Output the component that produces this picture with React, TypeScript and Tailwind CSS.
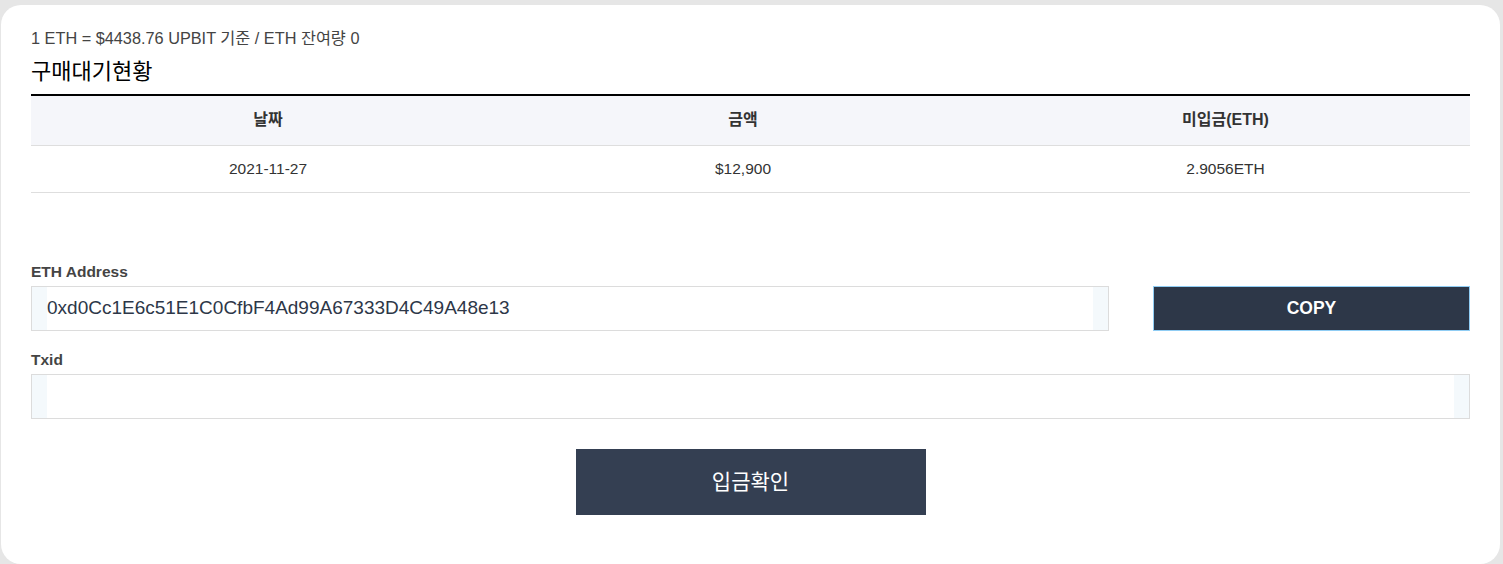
const rows = [{ date: "2021-11-27", amount: "$12,900", due: "2.9056ETH" }];

export default function App() {
  return (
    <div className="h-[564px] bg-[#e6e6e6] pt-[5px] pl-[1px] pr-[3px] font-['Liberation_Sans','Noto_Sans_CJK_KR',sans-serif]">
      <div className="flex h-full flex-col rounded-[20px] bg-white px-[30px]">
        <p className="mt-[24px] text-[16.3px] leading-[18px] text-[#444]">1 ETH = $4438.76 UPBIT 기준 / ETH 잔여량 0</p>
        <h2 className="mt-[14px] text-[22px] leading-[22px] text-black">구매대기현황</h2>

        <table className="mt-[11px] w-full table-fixed border-t-2 border-black text-[15.5px] text-[#333]">
          <colgroup>
            <col className="w-[474px]" />
            <col className="w-[476px]" />
            <col />
          </colgroup>
          <thead>
            <tr className="h-[50px] border-b border-[#dedede] bg-[#f5f6fa] text-[16px]">
              <th className="font-bold">날짜</th>
              <th className="font-bold">금액</th>
              <th className="font-bold">미입금(ETH)</th>
            </tr>
          </thead>
          <tbody>
            {rows.map((r) => (
              <tr key={r.date} className="h-[47px] border-b border-[#dedede]">
                <td className="text-center">{r.date}</td>
                <td className="text-center">{r.amount}</td>
                <td className="text-center">{r.due}</td>
              </tr>
            ))}
          </tbody>
        </table>

        <label className="mt-[71px] text-[15.5px] font-bold leading-[16px] text-[#444]">ETH Address</label>
        <div className="mt-[6px] flex items-stretch gap-[44px]">
          <div className="flex h-[45px] flex-1 border border-[#dcdcdc] bg-[#f4f9fc] px-[15px]">
            <input
              readOnly
              value="0xd0Cc1E6c51E1C0CfbF4Ad99A67333D4C49A48e13"
              className="w-full bg-white text-[19px] text-[#2d3748] outline-none"
            />
          </div>
          <button className="h-[45px] w-[317px] border border-[#90cdf4] bg-[#2d3748] text-[17.5px] font-bold text-white">
            COPY
          </button>
        </div>

        <label className="mt-[21px] text-[15.5px] font-bold leading-[16px] text-[#444]">Txid</label>
        <div className="mt-[6px] flex h-[45px] border border-[#dcdcdc] bg-[#f4f9fc] px-[15px]">
          <input className="w-full bg-white text-[19px] outline-none" />
        </div>

        <div className="mt-[30px] flex justify-center">
          <button className="h-[66px] w-[350px] bg-[#343f52] text-[21px] text-white">입금확인</button>
        </div>
      </div>
    </div>
  );
}
